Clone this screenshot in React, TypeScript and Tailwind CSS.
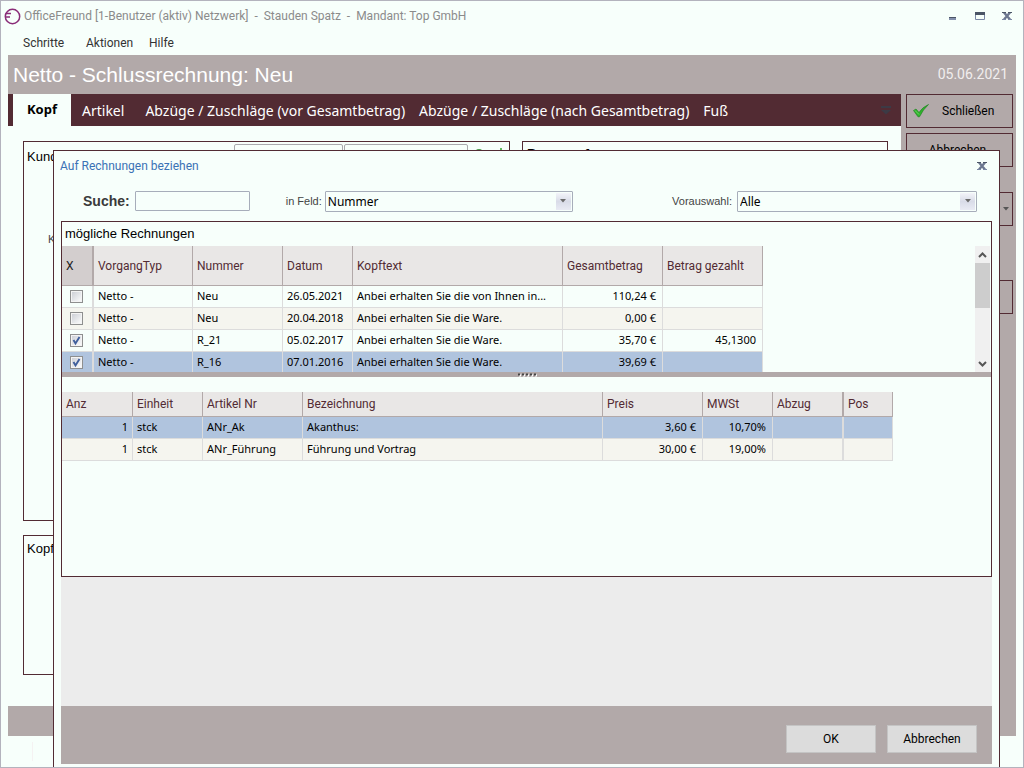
import { useState } from "react";
import clsx from "clsx";

type Invoice = {
  id: number;
  checked: boolean;
  type: string;
  number: string;
  date: string;
  text: string;
  total: string;
  paid: string;
};

const invoices: Invoice[] = [
  { id: 1, checked: false, type: "Netto -", number: "Neu", date: "26.05.2021", text: "Anbei erhalten Sie die von Ihnen in...", total: "110,24 €", paid: "" },
  { id: 2, checked: false, type: "Netto -", number: "Neu", date: "20.04.2018", text: "Anbei erhalten Sie die Ware.", total: "0,00 €", paid: "" },
  { id: 3, checked: true, type: "Netto -", number: "R_21", date: "05.02.2017", text: "Anbei erhalten Sie die Ware.", total: "35,70 €", paid: "45,1300" },
  { id: 4, checked: true, type: "Netto -", number: "R_16", date: "07.01.2016", text: "Anbei erhalten Sie die Ware.", total: "39,69 €", paid: "" },
];

const positions = [
  { count: "1", unit: "stck", article: "ANr_Ak", name: "Akanthus:", price: "3,60 €", vat: "10,70%" },
  { count: "1", unit: "stck", article: "ANr_Führung", name: "Führung und Vortrag", price: "30,00 €", vat: "19,00%" },
];

const tabs = ["Artikel", "Abzüge / Zuschläge (vor Gesamtbetrag)", "Abzüge / Zuschläge (nach Gesamtbetrag)", "Fuß"];

const headCell = "border-r border-b border-[#b2a9a9] bg-[#e9e7e6] px-1 text-left font-normal";
const cell = "overflow-hidden whitespace-nowrap border-r border-b border-[#dcdcdc] pl-1";

function CloseIcon() {
  return (
    <svg width="10" height="8" viewBox="0 0 10 8" fill="none">
      <path d="M2 0.5L8 7.5M8 0.5L2 7.5" stroke="#6d7890" strokeWidth="2.4" />
      <path d="M0 0.5h4M6 0.5h4" stroke="#4b5566" />
      <path d="M0 7.5h4M6 7.5h4" stroke="#7b88a6" />
    </svg>
  );
}

function Logo() {
  return (
    <svg width="17" height="17" viewBox="0 0 17 17" fill="none" stroke="#8a2c78">
      <circle cx="8.5" cy="8.5" r="7.2" strokeWidth="1.5" />
      <path d="M1.5 5.5H7M1 9H6" strokeWidth="1.5" />
    </svg>
  );
}

function GreenCheck() {
  return (
    <svg width="16" height="14" viewBox="0 0 16 14">
      <path d="M0.5 6.5L3 5L6 8.5Q9.5 3 15.5 0.5Q10 5.5 6.5 12.8H5Z" fill="#2fb32b" stroke="#1b7d1d" strokeWidth="0.6" />
      <path d="M2 6.5L6 10.5" stroke="#7be070" strokeWidth="0.8" fill="none" />
    </svg>
  );
}

function TickBox({ label, checked, onChange }: { label: string; checked: boolean; onChange: () => void }) {
  return (
    <span className="relative ml-2 block size-[13px]">
      <input
        type="checkbox"
        aria-label={label}
        checked={checked}
        onChange={onChange}
        className="block size-[13px] appearance-none border border-[#8e8f8f] bg-linear-to-br from-[#c9ccd3] to-white shadow-[inset_0_0_0_1px_#f4f4f4]"
      />
      {checked && (
        <svg className="pointer-events-none absolute inset-0" width="13" height="13" viewBox="0 0 13 13" fill="none">
          <path d="M3.5 6L5.5 9.5L9.5 3" stroke="#3f5f9c" strokeWidth="1.9" />
        </svg>
      )}
    </span>
  );
}

function ComboBox({ id, options, className }: { id: string; options: string[]; className: string }) {
  return (
    <div className={clsx("relative h-[21px]", className)}>
      <select
        id={id}
        className="block size-full appearance-none rounded-[1px] border border-[#a7adba] bg-[#f7fffb] pl-[2px] font-['Noto_Sans',sans-serif] text-[12px] leading-[19px] text-black"
      >
        {options.map((o) => (
          <option key={o}>{o}</option>
        ))}
      </select>
      <span className="pointer-events-none absolute top-[2px] right-[2px] flex h-[17px] w-[15px] items-center justify-center bg-linear-to-b from-[#f3f4f9] via-[#d9dce8] to-[#e9ebf4]">
        <svg width="6" height="4" viewBox="0 0 6 4">
          <path d="M0 0h6L3 3.5Z" fill="#6b6b6b" />
        </svg>
      </span>
    </div>
  );
}

function InvoiceTable() {
  const [rows, setRows] = useState(invoices);
  const toggle = (id: number) => setRows(rows.map((r) => (r.id === id ? { ...r, checked: !r.checked } : r)));

  return (
    <div className="flex h-[126px] overflow-hidden">
      <div className="min-w-0 flex-1 overflow-hidden">
        <table className="w-[701px] table-fixed border-separate border-spacing-0 font-['Noto_Sans',sans-serif] text-[11px] text-black">
          <colgroup>
            <col className="w-[32px]" />
            <col className="w-[99px]" />
            <col className="w-[90px]" />
            <col className="w-[70px]" />
            <col className="w-[210px]" />
            <col className="w-[100px]" />
            <col className="w-[100px]" />
          </colgroup>
          <thead className="font-['Roboto',sans-serif] text-[12px] text-[#522b33]">
            <tr className="h-[40px]">
              <th className="border-r-2 border-b border-[#b2a9a9] bg-[#d3cece] px-1 text-left font-normal text-[#222]">X</th>
              <th className={headCell}>VorgangTyp</th>
              <th className={headCell}>Nummer</th>
              <th className={headCell}>Datum</th>
              <th className={headCell}>Kopftext</th>
              <th className={headCell}>Gesamtbetrag</th>
              <th className={headCell}>Betrag gezahlt</th>
            </tr>
          </thead>
          <tbody>
            {rows.map((r) => (
              <tr key={r.id} className={clsx("h-[22px]", r.id === 4 ? "bg-[#b0c4de]" : r.id === 2 ? "bg-[#f5f5ef]" : "bg-[#f7fffb]")}>
                <td className="border-r-2 border-b border-[#dcdcdc]">
                  <TickBox label={`Rechnung ${r.number} vom ${r.date}`} checked={r.checked} onChange={() => toggle(r.id)} />
                </td>
                <td className={cell}>{r.type}</td>
                <td className={cell}>{r.number}</td>
                <td className={cell}>{r.date}</td>
                <td className={cell}>{r.text}</td>
                <td className={clsx(cell, "pr-[6px] text-right")}>{r.total}</td>
                <td className={clsx(cell, "pr-[6px] text-right")}>{r.paid}</td>
              </tr>
            ))}
          </tbody>
        </table>
      </div>
      <div className="mr-px flex w-[15px] flex-col items-center bg-[#f0f0f0]">
        <div className="flex h-[17px] items-center">
          <svg width="9" height="6" viewBox="0 0 9 6" fill="none">
            <path d="M1 5L4.500 1.500L8 5" stroke="#555" strokeWidth="2" />
          </svg>
        </div>
        <div className="h-[45px] w-full bg-[#cdcdcd]" />
        <div className="mt-auto flex h-[17px] items-center">
          <svg width="9" height="6" viewBox="0 0 9 6" fill="none">
            <path d="M1 1L4.500 4.500L8 1" stroke="#555" strokeWidth="2" />
          </svg>
        </div>
      </div>
    </div>
  );
}

function PositionTable() {
  return (
    <table className="mt-[15px] w-[831px] table-fixed border-separate border-spacing-0 font-['Noto_Sans',sans-serif] text-[11px] text-black">
      <colgroup>
        <col className="w-[71px]" />
        <col className="w-[70px]" />
        <col className="w-[100px]" />
        <col className="w-[300px]" />
        <col className="w-[100px]" />
        <col className="w-[70px]" />
        <col className="w-[71px]" />
        <col className="w-[49px]" />
      </colgroup>
      <thead className="font-['Roboto',sans-serif] text-[12px] text-[#522b33]">
        <tr className="h-[25px]">
          <th className={headCell}>Anz</th>
          <th className={headCell}>Einheit</th>
          <th className={headCell}>Artikel Nr</th>
          <th className={headCell}>Bezeichnung</th>
          <th className={headCell}>Preis</th>
          <th className={headCell}>MWSt</th>
          <th className="border-r-2 border-b border-[#b2a9a9] bg-[#e9e7e6] px-1 text-left font-normal">Abzug</th>
          <th className={headCell}>Pos</th>
        </tr>
      </thead>
      <tbody>
        {positions.map((p, i) => (
          <tr key={p.article} className={clsx("h-[22px]", i === 0 ? "bg-[#b0c4de]" : "bg-[#f5f5ef]")}>
            <td className={clsx(cell, "pr-1 text-right")}>{p.count}</td>
            <td className={cell}>{p.unit}</td>
            <td className={cell}>{p.article}</td>
            <td className={cell}>{p.name}</td>
            <td className={clsx(cell, "pr-[6px] text-right")}>{p.price}</td>
            <td className={clsx(cell, "pr-[6px] text-right")}>{p.vat}</td>
            <td className="border-r-2 border-b border-[#dcdcdc]" />
            <td className={cell} />
          </tr>
        ))}
      </tbody>
    </table>
  );
}

function InvoiceDialog() {
  return (
    <section
      role="dialog"
      aria-labelledby="dialog-title"
      className="absolute top-[149px] right-[23px] -bottom-px left-[52px] flex flex-col border-x border-t border-[#522b33] bg-[#f7fffb] px-[7px] pb-1"
    >
      <header className="-ml-px flex h-[30px] items-center justify-between pr-1">
        <h2 id="dialog-title" className="text-[12px] text-[#3a72b5]">
          Auf Rechnungen beziehen
        </h2>
        <button type="button" aria-label="Dialog schließen" className="p-px">
          <CloseIcon />
        </button>
      </header>

      <form className="flex h-10 items-center pr-[15px] pl-[22px] font-['Liberation_Sans',sans-serif] text-[12px] text-[#444]">
        <label htmlFor="search" className="text-[14px] font-bold text-[#3a3a3a]">
          Suche:
        </label>
        <input id="search" type="text" className="ml-[5px] h-5 w-[115px] rounded-[1px] border border-[#a7adba] bg-[#f7fffb] px-1" />
        <label htmlFor="field" className="ml-9 text-[11px]">
          in Feld:
        </label>
        <ComboBox id="field" options={["Nummer", "Datum", "Kopftext"]} className="ml-[3px] w-[248px]" />
        <label htmlFor="preset" className="ml-auto text-[11px]">
          Vorauswahl:
        </label>
        <ComboBox id="preset" options={["Alle", "Offene"]} className="ml-[5px] w-[240px]" />
      </form>

      <div className="h-[356px] border border-[#522b33]">
        <h3 className="h-6 pl-[3px] font-['Liberation_Sans',sans-serif] text-[13px] leading-6 text-black">mögliche Rechnungen</h3>
        <InvoiceTable />
        <div className="flex h-[5px] items-center justify-center bg-[#b2a9a9]">
          <svg width="20" height="4" viewBox="0 0 20 4">
            <path d="M2 2.500h18" stroke="#fff" strokeWidth="2" strokeDasharray="2 2" />
            <path d="M1 1.500h18" stroke="#444" strokeWidth="2" strokeDasharray="2 2" />
          </svg>
        </div>
        <PositionTable />
      </div>

      <div className="flex-1 bg-[#ececec]" />

      <footer className="flex h-[58px] items-center justify-end gap-[11px] bg-[#b2a9a9] px-[15px] pt-2">
        <button type="button" className="h-7 w-[90px] border border-[#c4c4c4] bg-[#dcdcdc] text-[12px] text-black">
          OK
        </button>
        <button type="button" className="h-7 w-[90px] border border-[#c4c4c4] bg-[#dcdcdc] text-[12px] text-black">
          Abbrechen
        </button>
      </footer>
    </section>
  );
}

export default function App() {
  return (
    <div className="relative flex min-h-screen flex-col overflow-hidden border border-[#b3b3bd] bg-[#f7fffb] px-[7px] font-['Roboto','Noto_Sans',sans-serif] text-[12px] text-[#333]">
      <header className="-ml-1 flex h-[30px] items-center gap-[3px] text-[#8b8b8b]">
        <Logo />
        <h1 className="whitespace-pre">OfficeFreund [1-Benutzer (aktiv) Netzwerk]  -  Stauden Spatz  -  Mandant: Top GmbH</h1>
        <div className="ml-auto flex items-center gap-[17px] pr-1">
          <button type="button" aria-label="Minimieren">
            <svg width="9" height="8" viewBox="0 0 9 8">
              <path d="M0 5h7v1H0z" fill="#4b5566" />
              <path d="M0 6h7v2H0z" fill="#8490ac" />
            </svg>
          </button>
          <button type="button" aria-label="Maximieren">
            <svg width="10" height="8" viewBox="0 0 10 8">
              <path d="M0.500 0.500h9v7h-9z" fill="none" stroke="#7b88a6" />
              <path d="M0 0h10v3H0z" fill="#4b5566" />
            </svg>
          </button>
          <button type="button" aria-label="Schließen">
            <CloseIcon />
          </button>
        </div>
      </header>

      <nav className="flex h-6 items-center pl-[15px]">
        <button type="button" className="w-[63px] text-left">
          Schritte
        </button>
        <button type="button" className="w-[63px] text-left">
          Aktionen
        </button>
        <button type="button">Hilfe</button>
      </nav>

      <div className="flex h-[39px] items-center justify-between bg-[#b2a9a9] pr-2 pl-[5px] text-white">
        <h2 className="font-['Liberation_Sans',sans-serif] text-[21px]">Netto - Schlussrechnung: Neu</h2>
        <span className="text-[14px] text-[#f1eeee]">05.06.2021</span>
      </div>

      <div className="flex flex-1">
        <main className="flex min-w-0 flex-1 flex-col">
          <div role="tablist" className="flex h-8 items-stretch bg-[#522b33] pr-[10px] pl-[5px] font-['Noto_Sans',sans-serif] text-[14px] text-white">
            <button type="button" role="tab" aria-selected="true" className="w-[58px] bg-[#f7fffb] text-[13px] font-bold text-black">
              Kopf
            </button>
            {tabs.map((tab, i) => (
              <button key={tab} type="button" role="tab" aria-selected="false" className={clsx("pl-[11px] whitespace-nowrap", i === 0 ? "pr-[10px]" : "pr-[3px]")}>
                {tab}
              </button>
            ))}
            <button type="button" aria-label="Weitere Register" className="ml-auto">
              <svg width="10" height="9" viewBox="0 0 10 9" fill="#3c3a45">
                <path d="M0 0h10v2H0zM0 4h10L5 8.500Z" />
              </svg>
            </button>
          </div>

          <div className="flex flex-1 flex-col gap-[14px] pt-[15px] pr-[13px] pb-[31px] pl-[15px] font-['Liberation_Sans',sans-serif] text-[13px] text-black">
            <div className="flex flex-1 gap-3">
              <fieldset className="flex w-[487px] flex-col border border-[#522b33] pt-[2px] pl-[3px]">
                <div className="flex items-start">
                  <label htmlFor="customer" className="mt-[3px] w-[207px]">
                    Kunde
                  </label>
                  <input id="customer" className="h-5 w-[109px] rounded-[2px] border border-[#a9a9ad] bg-[#f7fffb]" />
                  <input aria-label="Kundenname" className="ml-px h-5 w-[124px] rounded-[2px] border border-[#a9a9ad] bg-[#f7fffb]" />
                  <svg className="mt-1 ml-1" width="34" height="16" viewBox="0 0 34 16" fill="none">
                    <circle cx="7" cy="6" r="4" stroke="#4a9a4a" strokeWidth="2" />
                    <path d="M29 0v8M26 4h6" stroke="#2fa32b" strokeWidth="1.5" />
                  </svg>
                </div>
                <span className="mt-16 ml-[21px] text-[11px] text-[#444]">Kt.</span>
              </fieldset>
              <fieldset className="flex-1 border border-[#522b33] pt-[2px] pl-1">
                <span className="font-bold">Bezug auf</span>
              </fieldset>
            </div>
            <fieldset className="h-[140px] border border-[#522b33] pt-[3px] pl-[3px]">Kopftext</fieldset>
          </div>
        </main>

        <aside className="flex w-[115px] flex-col bg-[#b2a9a9] pr-[3px] pl-[5px] text-[12px] text-black">
          <button type="button" className="flex h-[34px] items-center gap-[13px] border border-[#522b33] pl-[6px]">
            <GreenCheck />
            Schließen
          </button>
          <button type="button" className="mt-[5px] h-[34px] border border-[#522b33] pr-1">
            Abbrechen
          </button>
          <button type="button" aria-label="Drucken" className="mt-[25px] flex h-[34px] items-center justify-end border border-[#522b33] pr-[3px]">
            <svg width="6" height="4" viewBox="0 0 6 4">
              <path d="M0 0h6L3 3.500Z" fill="#555" />
            </svg>
          </button>
          <button type="button" aria-label="Vorschau" className="mt-[54px] h-[34px] border border-[#522b33]" />
        </aside>
      </div>

      <div className="h-[30px] bg-[#b2a9a9]" />
      <div className="h-[31px] py-[6px] pl-6">
        <div className="h-full w-px bg-[#f5f2f2]" />
      </div>

      <InvoiceDialog />
    </div>
  );
}
